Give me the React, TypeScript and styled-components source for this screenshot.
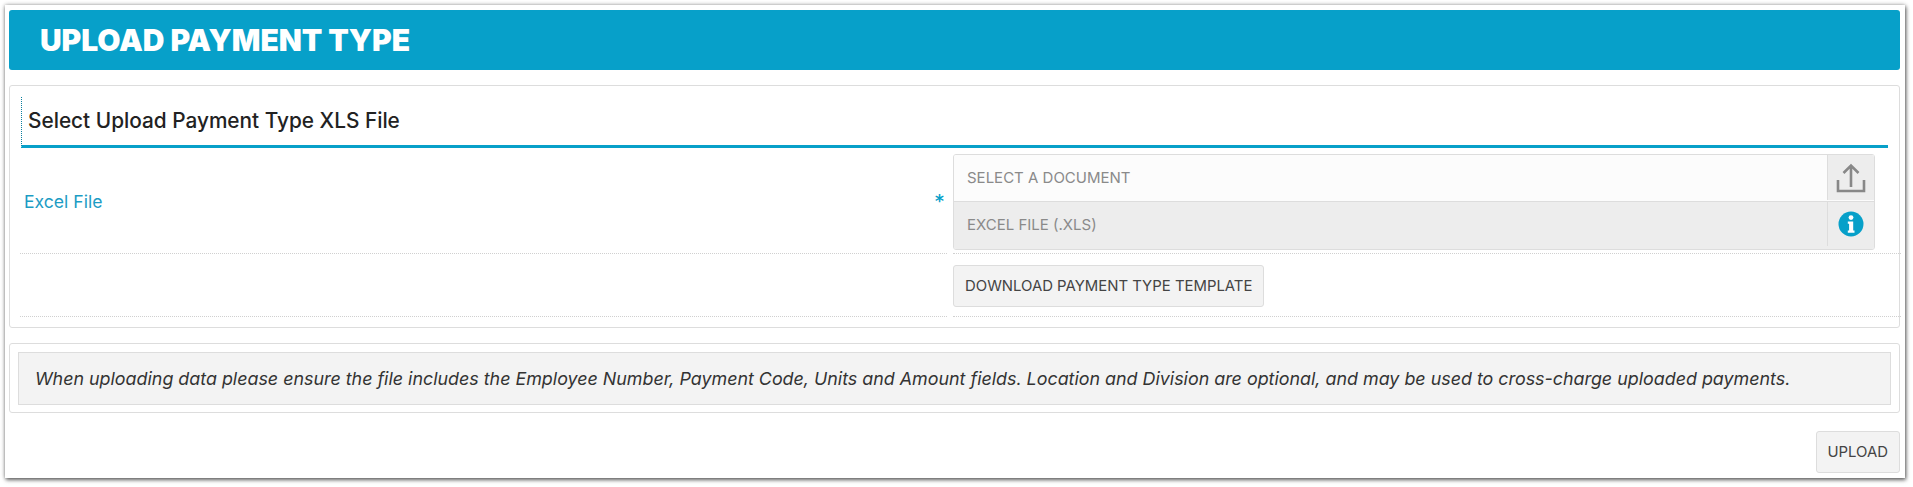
import React from 'react';
import styled, { createGlobalStyle } from 'styled-components';

const Global = createGlobalStyle`
  html, body { margin: 0; padding: 0; background: #fff; }
  body { font-family: Inter, "Liberation Sans", sans-serif; color: #333; }
`;

const Page = styled.div`
  width: 1913px;
  height: 487px;
  box-sizing: border-box;
  padding: 5px 8px 9px 5px;
  overflow: hidden;
`;

const Sheet = styled.div`
  height: 473px;
  box-sizing: border-box;
  background: #fff;
  padding: 5px 5px 5px 4px;
  box-shadow: 0 0 4px rgba(0, 0, 0, 0.35), 1px 2px 4px rgba(0, 0, 0, 0.55);
  display: flex;
  flex-direction: column;
`;

const Banner = styled.h1`
  margin: 0;
  height: 60px;
  box-sizing: border-box;
  padding-left: 31px;
  display: flex;
  align-items: center;
  background: #07a0c9;
  border-radius: 3px;
  color: #fff;
  font-size: 30px;
  font-weight: 900;
  letter-spacing: -0.05px;
`;

const Panel = styled.section`
  margin-top: 15px;
  box-sizing: border-box;
  height: 243px;
  padding: 11px 11px 0;
  border: 1px solid #ddd;
  border-radius: 3px;
`;

const Heading = styled.h2`
  margin: 0 0 6px;
  height: 51px;
  box-sizing: border-box;
  padding: 0 0 1px 6px;
  display: flex;
  align-items: center;
  border-left: 1px dotted #0a7f9e;
  border-bottom: 3px solid #07a0c9;
  color: #222;
  font-size: 20.8px;
  font-weight: 500;
`;

const Row = styled.div<{ $height: number }>`
  display: grid;
  grid-template-columns: 926px 1fr;
  column-gap: 6px;
  height: ${(p) => p.$height}px;
  box-sizing: border-box;
`;

const LabelCell = styled.div`
  display: flex;
  align-items: center;
  justify-content: space-between;
  padding: 0 3px 4px 4px;
  border-bottom: 1px dotted #d0d0d0;
  margin-left: -1px;
`;

const FieldLabel = styled.label`
  color: #1c9cc4;
  font-size: 17.6px;
`;

const Required = styled.span`
  color: #07a0c9;
  font-size: 17px;
  font-weight: 700;
  font-family: "DejaVu Sans", sans-serif;
  margin-top: -2px;
`;

const ValueCell = styled.div`
  border-bottom: 1px dotted #d0d0d0;
  margin-right: -13px;
  padding-right: 13px;
`;

const FileBox = styled.div`
  width: 922px;
  height: 96px;
  box-sizing: border-box;
  border: 1px solid #ddd;
  border-radius: 3px;
  overflow: hidden;
`;

const FileLine = styled.div<{ $muted?: boolean }>`
  display: flex;
  box-sizing: border-box;
  height: ${(p) => (p.$muted ? '48px' : '46px')};
  padding-bottom: ${(p) => (p.$muted ? '3px' : '1px')};
  background: ${(p) => (p.$muted ? '#ededed' : '#fcfcfc')};
  & + & {
    border-top: 1px solid #ddd;
  }
`;

const FileText = styled.div`
  flex: 1;
  display: flex;
  align-items: center;
  padding-left: 13px;
  color: #8a8a8a;
  font-size: 15px;
`;

const IconCell = styled.div`
  width: 46px;
  display: flex;
  align-items: center;
  justify-content: center;
  background: #ededed;
  border-left: 1px solid #ddd;
`;

const Button = styled.button`
  height: 42px;
  box-sizing: border-box;
  padding: 0 11px;
  background: #f3f3f3;
  border: 1px solid #ddd;
  border-radius: 3px;
  color: #444;
  font-family: inherit;
  font-size: 14.9px;
`;

const TemplateButton = styled(Button)`
  margin-top: 11px;
`;

const NotePanel = styled.section`
  margin-top: 15px;
  box-sizing: border-box;
  height: 70px;
  padding: 8px;
  border: 1px solid #ddd;
  border-radius: 3px;
`;

const Note = styled.div`
  height: 53px;
  box-sizing: border-box;
  display: flex;
  align-items: center;
  padding-left: 16px;
  background: #f3f3f3;
  border: 1px solid #ddd;
  color: #333;
  font-size: 17.88px;
  font-style: italic;
`;

const Actions = styled.div`
  margin-top: 18px;
  display: flex;
  justify-content: flex-end;
`;

const UploadIcon = () => (
  <svg width="30" height="30" viewBox="0 0 30 30" fill="none" stroke="#888" strokeWidth="2.6">
    <path d="M2 17v11h26V17" />
    <path d="M15 24V2.5M7.5 10 15 2.5l7.5 7.5" />
  </svg>
);

const InfoIcon = () => (
  <svg width="26" height="26" viewBox="0 0 26 26">
    <circle cx="13" cy="13" r="12.5" fill="#07a0c9" />
    <circle cx="13" cy="6.6" r="2.4" fill="#fff" />
    <path d="M9.8 10.6h5.4v9h1.3v2.2H9.8v-2.2h1.3v-6.8H9.8z" fill="#fff" />
  </svg>
);

export default function App() {
  return (
    <Page>
      <Global />
      <Sheet>
        <Banner>UPLOAD PAYMENT TYPE</Banner>
        <Panel>
          <Heading>Select Upload Payment Type XLS File</Heading>
          <Row $height={100}>
            <LabelCell>
              <FieldLabel>Excel File</FieldLabel>
              <Required>*</Required>
            </LabelCell>
            <ValueCell>
              <FileBox>
                <FileLine>
                  <FileText>SELECT A DOCUMENT</FileText>
                  <IconCell><UploadIcon /></IconCell>
                </FileLine>
                <FileLine $muted>
                  <FileText>EXCEL FILE (.XLS)</FileText>
                  <IconCell><InfoIcon /></IconCell>
                </FileLine>
              </FileBox>
            </ValueCell>
          </Row>
          <Row $height={63}>
            <LabelCell />
            <ValueCell>
              <TemplateButton>DOWNLOAD PAYMENT TYPE TEMPLATE</TemplateButton>
            </ValueCell>
          </Row>
        </Panel>
        <NotePanel>
          <Note>
            When uploading data please ensure the file includes the Employee Number, Payment Code, Units and Amount fields. Location and Division are optional, and may be used to cross-charge uploaded payments.
          </Note>
        </NotePanel>
        <Actions>
          <Button>UPLOAD</Button>
        </Actions>
      </Sheet>
    </Page>
  );
}
